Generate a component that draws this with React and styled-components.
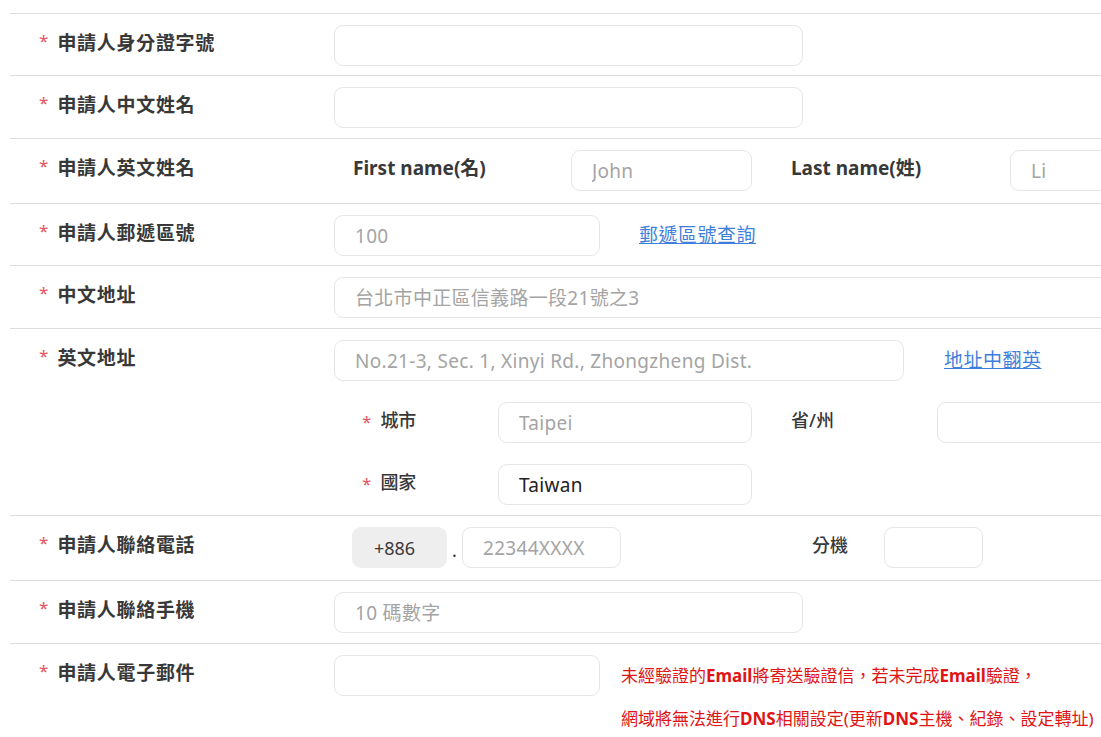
import styled, { createGlobalStyle } from 'styled-components';

const GlobalStyle = createGlobalStyle`
    body {
        margin: 0;
        overflow: hidden;
        background: #fff;
        font-family: "Noto Sans", "Noto Sans CJK TC", sans-serif;
    }
`

function App() {
    return (
        <>
            <GlobalStyle />
            <Form>
                <Row $pb={9}>
                    <Label><Star>*</Star>申請人身分證字號</Label>
                    <Field>
                        <Input $w={469} />
                    </Field>
                </Row>
                <Row>
                    <Label><Star>*</Star>申請人中文姓名</Label>
                    <Field>
                        <Input $w={469} />
                    </Field>
                </Row>
                <Row $pb={12}>
                    <Label><Star>*</Star>申請人英文姓名</Label>
                    <Field>
                        <Line>
                            <SubLabel $w={237} $pl={19} $bold>First name(名)</SubLabel>
                            <Input $w={181} placeholder="John" />
                            <SubLabel $w={219} $ml={39} $bold>Last name(姓)</SubLabel>
                            <Input $w={181} placeholder="Li" />
                        </Line>
                    </Field>
                </Row>
                <Row $pb={9}>
                    <Label><Star>*</Star>申請人郵遞區號</Label>
                    <Field>
                        <Line>
                            <Input $w={266} placeholder="100" />
                            <Link href="#" $ml={39}>郵遞區號查詢</Link>
                        </Line>
                    </Field>
                </Row>
                <Row>
                    <Label><Star>*</Star>中文地址</Label>
                    <Field>
                        <Input $w={800} placeholder="台北市中正區信義路一段21號之3" />
                    </Field>
                </Row>
                <Row>
                    <Label><Star>*</Star>英文地址</Label>
                    <Field>
                        <Line>
                            <Input $w={570} placeholder="No.21-3, Sec. 1, Xinyi Rd., Zhongzheng Dist." />
                            <Link href="#" $ml={40}>地址中翻英</Link>
                        </Line>
                        <Line>
                            <SubLabel $w={164} $pl={28}><Star>*</Star>城市</SubLabel>
                            <Input $w={254} placeholder="Taipei" />
                            <SubLabel $w={146} $ml={39}>省/州</SubLabel>
                            <Input $w={200} />
                        </Line>
                        <Line>
                            <SubLabel $w={164} $pl={28}><Star>*</Star>國家</SubLabel>
                            <Input $w={254} defaultValue="Taiwan" />
                        </Line>
                    </Field>
                </Row>
                <Row $pb={12}>
                    <Label><Star>*</Star>申請人聯絡電話</Label>
                    <Field>
                        <Line>
                            <Prefix>+886</Prefix>
                            <Dot>.</Dot>
                            <Input $w={159} placeholder="22344XXXX" />
                            <SubLabel $w={72} $ml={191}>分機</SubLabel>
                            <Input $w={99} />
                        </Line>
                    </Field>
                </Row>
                <Row>
                    <Label><Star>*</Star>申請人聯絡手機</Label>
                    <Field>
                        <Input $w={469} placeholder="10 碼數字" />
                    </Field>
                </Row>
                <Row>
                    <Label><Star>*</Star>申請人電子郵件</Label>
                    <Field>
                        <Line $top>
                            <Input $w={266} />
                            <Note>
                                <p>未經驗證的<b>Email</b>將寄送驗證信，若未完成<b>Email</b>驗證，</p>
                                <p>網域將無法進行<b>DNS</b>相關設定(更新<b>DNS</b>主機、紀錄、設定轉址)</p>
                            </Note>
                        </Line>
                    </Field>
                </Row>
            </Form>
        </>
    )
}

const Form = styled.div`
    width: 1180px;
    margin: 13px 0 0 10px;
`

const Row = styled.div`
    display: flex;
    border-top: 1px solid #dedede;
    padding: 11px 0 ${p => p.$pb || 10}px;
`

const Label = styled.div`
    width: 324px;
    flex-shrink: 0;
    box-sizing: border-box;
    padding-left: 29px;
    height: 33px;
    display: flex;
    align-items: center;
    font-size: 19px;
    font-weight: 700;
    letter-spacing: 0.7px;
    color: #383838;
`

const Star = styled.span`
    color: #e8545c;
    font-size: 17px;
    font-weight: 400;
    margin-right: 9px;
    align-self: flex-start;
    margin-top: 4px;
    letter-spacing: 0;
`

const Field = styled.div`
    flex: 1;
    display: flex;
    flex-direction: column;
    align-items: flex-start;
    gap: 21px;
`

const Line = styled.div`
    display: flex;
    align-items: ${p => p.$top ? 'flex-start' : 'center'};
`

const Input = styled.input`
    width: ${p => p.$w}px;
    height: 41px;
    flex-shrink: 0;
    box-sizing: border-box;
    border: 1px solid #e6e6e6;
    border-radius: 9px;
    padding: 0 20px;
    background: #fff;
    font-family: inherit;
    font-size: 19px;
    letter-spacing: 0.3px;
    color: #222;
    outline: none;

    &::placeholder {
        color: #a4a4a4;
    }
`

const SubLabel = styled.div`
    width: ${p => p.$w}px;
    flex-shrink: 0;
    box-sizing: border-box;
    padding-left: ${p => p.$pl || 0}px;
    margin-left: ${p => p.$ml || 0}px;
    padding-bottom: 7px;
    display: flex;
    align-items: center;
    font-size: ${p => p.$bold ? 19 : 18}px;
    font-weight: ${p => p.$bold ? 700 : 500};
    color: #383838;
`

const Link = styled.a`
    margin-left: ${p => p.$ml}px;
    padding-bottom: 4px;
    font-size: 19px;
    letter-spacing: 0.5px;
    color: #3f7fdc;
    text-decoration: underline;
`

const Prefix = styled.div`
    width: 95px;
    height: 41px;
    margin-left: 18px;
    box-sizing: border-box;
    padding-right: 10px;
    border-radius: 9px;
    background: #eeeeee;
    display: flex;
    align-items: center;
    justify-content: center;
    font-size: 18px;
    color: #3a3a3a;
`

const Dot = styled.span`
    width: 15px;
    text-align: center;
    font-size: 18px;
    color: #333;
    padding-top: 4px;
`

const Note = styled.div`
    margin-left: 21px;
    margin-top: -1px;
    font-size: 17px;
    color: #e01414;

    p {
        margin: 0;
        line-height: 43px;
    }

    b {
        font-weight: 700;
    }
`

export default App
